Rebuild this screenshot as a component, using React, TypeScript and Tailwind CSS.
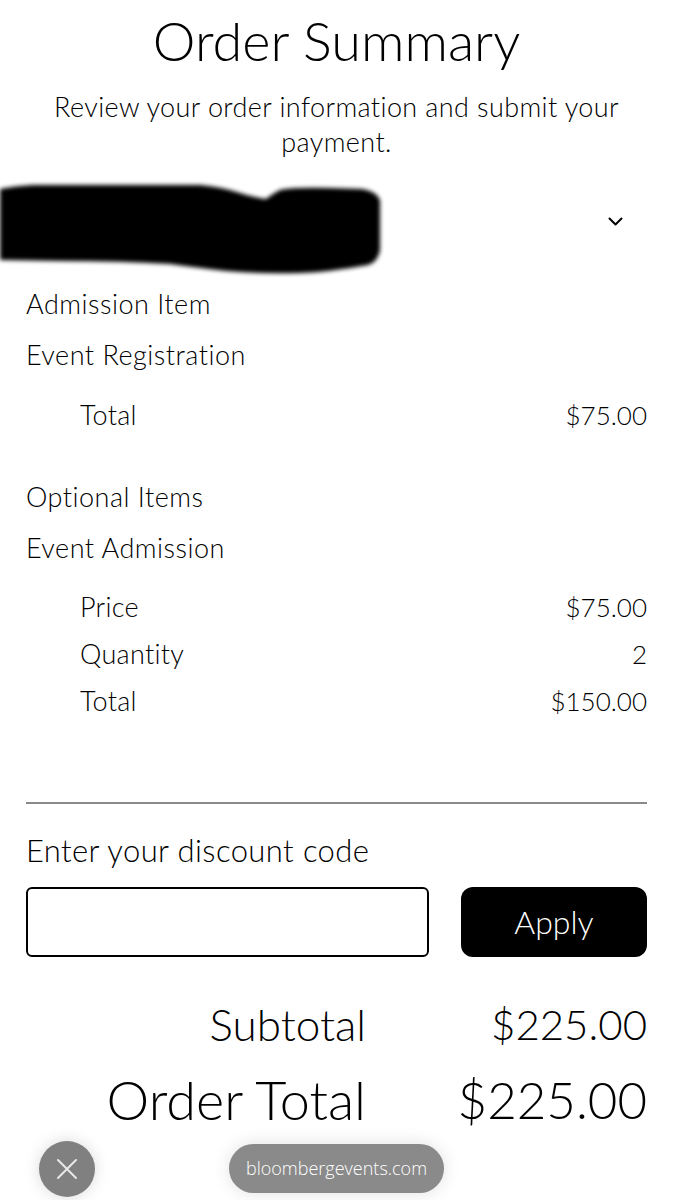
const font = { fontFamily: "Lato, 'Noto Sans', sans-serif" };

function Row({ label, value }: { label: string; value: string }) {
  return (
    <div className="flex justify-between pl-[54px] text-[27px] leading-[36px] tracking-[0.3px]">
      <span>{label}</span>
      <span className="text-[26px] tracking-normal">{value}</span>
    </div>
  );
}

function Redacted() {
  return (
    <svg width="384" height="96" viewBox="0 0 384 96" className="block overflow-visible">
      <defs>
        <filter id="soft" x="-10%" y="-20%" width="120%" height="140%">
          <feGaussianBlur stdDeviation="2.2" />
        </filter>
      </defs>
      <path
        d="M0 5 Q14 2 33 1 L200 1 Q222 3 240 9 Q256 14 266 15 Q272 10 280 6 Q292 3 330 4 L362 5 Q376 7 380 16 L380 66 Q378 78 368 81 Q330 88 300 89 Q260 90 226 87 Q200 84 170 80 Q120 77 60 77 L0 76 Z"
        fill="#000"
        filter="url(#soft)"
      />
    </svg>
  );
}

export default function App() {
  return (
    <div className="relative h-[1200px] w-[673px] overflow-hidden bg-white text-black font-light" style={font}>
      <header className="pt-[11px] text-center">
        <h1 className="text-[54px] leading-[60px] font-light">Order Summary</h1>
        <p className="mt-[18px] px-[40px] text-[27px] leading-[35px] tracking-[0.4px]">
          Review your order information and submit your payment.
        </p>
      </header>

      <div className="mt-[25px] flex h-[102px] items-start justify-between pr-[50px]">
        <Redacted />
        <svg className="mt-[33px]" width="15" height="9" viewBox="0 0 15 9" fill="none" stroke="#000" strokeWidth="2" strokeLinecap="round" strokeLinejoin="round">
          <path d="M1.5 1.5l6 6 6-6" />
        </svg>
      </div>

      <section className="px-[26px]">
        <div className="text-[27px] leading-[36px] tracking-[0.5px]">Admission Item</div>
        <div className="mt-[15px] text-[27px] leading-[36px] tracking-[0.5px]">Event Registration</div>
        <div className="mt-[24px]">
          <Row label="Total" value="$75.00" />
        </div>

        <div className="mt-[46px] text-[27px] leading-[36px] tracking-[0.5px]">Optional Items</div>
        <div className="mt-[15px] text-[27px] leading-[36px] tracking-[0.5px]">Event Admission</div>
        <div className="mt-[23px] flex flex-col gap-[11px]">
          <Row label="Price" value="$75.00" />
          <Row label="Quantity" value="2" />
          <Row label="Total" value="$150.00" />
        </div>

        <hr className="mt-[83px] border-t-[2px] border-[#8a8a8a]" />

        <div className="mt-[26px] text-[31px] leading-[40px] tracking-[0.4px]">Enter your discount code</div>
        <div className="mt-[17px] flex gap-[32px]">
          <input className="h-[70px] w-[403px] rounded-[6px] border-[2px] border-black bg-white px-3 text-[24px] outline-none" />
          <button className="h-[70px] flex-1 rounded-[12px] bg-black text-[32px] text-white font-light">Apply</button>
        </div>

        <div className="mt-[41px] grid grid-cols-[340px_1fr] leading-[52px]">
          <span className="text-right text-[44px]">Subtotal</span>
          <span className="text-right text-[42px]">$225.00</span>
        </div>
        <div className="mt-[19px] grid grid-cols-[340px_1fr] leading-[62px]">
          <span className="text-right text-[54px]">Order Total</span>
          <span className="text-right text-[51px]">$225.00</span>
        </div>
      </section>

      <div className="absolute left-[39px] top-[1141px] flex h-[56px] w-[56px] items-center justify-center rounded-full bg-[#808080] shadow-[0_0_16px_rgba(0,0,0,0.15)]">
        <svg width="24" height="24" viewBox="0 0 24 24" fill="none" stroke="#e8e8e8" strokeWidth="2" strokeLinecap="round">
          <path d="M3 3l18 18M21 3L3 21" />
        </svg>
      </div>
      <div
        className="absolute left-[229px] top-[1144px] flex h-[49px] w-[215px] items-center justify-center rounded-full bg-[#8a8a8a] text-[18px] text-white shadow-[0_0_18px_rgba(0,0,0,0.12)]"
        style={{ fontFamily: "'Open Sans', 'Noto Sans', sans-serif" }}
      >
        bloombergevents.com
      </div>
    </div>
  );
}
